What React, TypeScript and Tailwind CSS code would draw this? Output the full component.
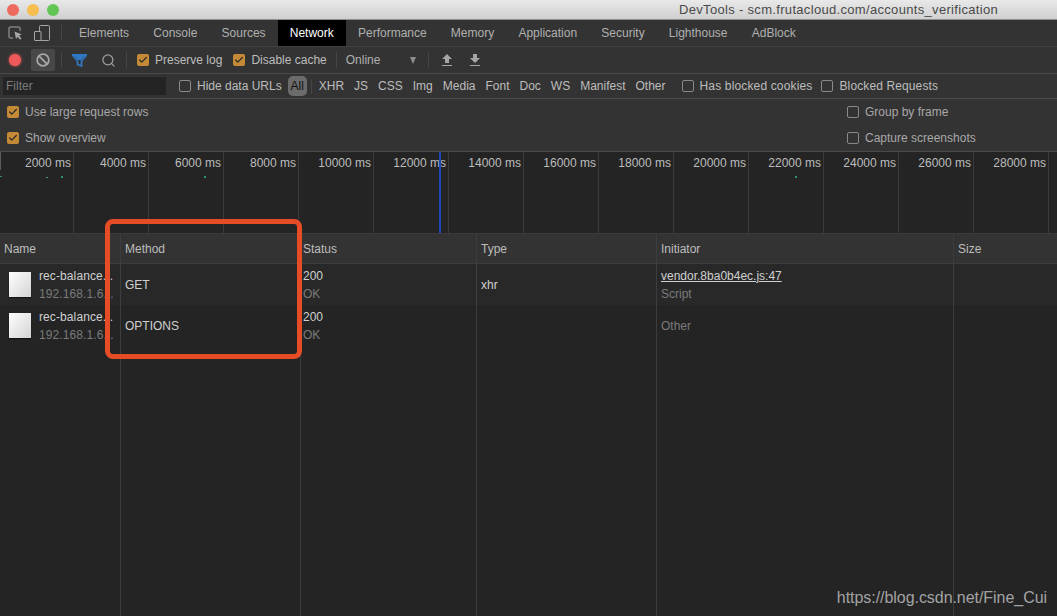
import { ReactNode } from "react";
import { Check, Search, Ban } from "lucide-react";

const tabs = ["Elements", "Console", "Sources", "Network", "Performance", "Memory", "Application", "Security", "Lighthouse", "AdBlock"];
const filters = ["XHR", "JS", "CSS", "Img", "Media", "Font", "Doc", "WS", "Manifest", "Other"];
const ticks = ["2000", "4000", "6000", "8000", "10000", "12000", "14000", "16000", "18000", "20000", "22000", "24000", "26000", "28000"];
const cols = "grid grid-cols-[121px_180px_176px_180px_297px_1fr]";

function Box({ checked, label, className = "" }: { checked?: boolean; label: string; className?: string }) {
  return (
    <label className={`flex items-center gap-[6px] whitespace-nowrap ${className}`}>
      {checked ? (
        <span className="w-[12px] h-[12px] rounded-[2px] bg-[#c48a35] flex items-center justify-center">
          <Check size={10} strokeWidth={3} className="text-[#2a2a2a]" />
        </span>
      ) : (
        <span className="w-[12px] h-[12px] rounded-[2px] border border-[#8a8a8a]" />
      )}
      <span>{label}</span>
    </label>
  );
}

function Cell({ children, last, tight }: { children?: ReactNode; last?: boolean; tight?: boolean }) {
  return (
    <div className={`flex flex-col justify-center min-w-0 ${tight ? "pl-[2px]" : "pl-[4px]"} ${last ? "" : "border-r border-[#3d3d3d]"}`}>
      {children}
    </div>
  );
}

function Two({ top, bottom, link }: { top: string; bottom: string; link?: boolean }) {
  return (
    <>
      <div className={`h-[18px] leading-[18px] text-[#d0d0d0] ${link ? "underline" : ""}`}>{top}</div>
      <div className="h-[18px] leading-[18px] text-[#7b7b7b]">{bottom}</div>
    </>
  );
}

function NameCell() {
  return (
    <div className="flex items-center gap-[8px] pl-[9px] border-r border-[#3d3d3d] min-w-0">
      <div className="w-[22px] h-[25px] shrink-0 bg-gradient-to-br from-white to-[#d4d4d4] shadow-[0_1px_1px_rgba(0,0,0,0.5)]" />
      <div className="min-w-0 tracking-[0.1px]">
        <div className="h-[18px] leading-[18px] text-[#d0d0d0] whitespace-nowrap">rec-balance...</div>
        <div className="h-[18px] leading-[18px] text-[#7b7b7b] whitespace-nowrap">192.168.1.6...</div>
      </div>
    </div>
  );
}

function Transfer({ up, className = "" }: { up?: boolean; className?: string }) {
  return (
    <svg width="10" height="12" viewBox="0 0 10 12" className={`text-[#a5a5a5] ${className}`}>
      <path d={up ? "M5 0l5 5H7v4H3V5H0z" : "M3 0h4v4h3l-5 5-5-5h3z"} fill="currentColor" />
      <rect x="0" y="11" width="10" height="1" fill="currentColor" />
    </svg>
  );
}

export default function App() {
  return (
    <div className="relative w-[1057px] h-[616px] overflow-hidden flex flex-col bg-[#242424] text-[12px] text-[#bdbdbd] font-['Liberation_Sans',sans-serif]">
      {/* mac title bar */}
      <div className="h-[20px] shrink-0 flex items-center bg-gradient-to-b from-[#e9e9e9] to-[#d0d0d0] border-b border-[#8f8f8f] pl-[7px]">
        <span className="w-[12px] h-[12px] rounded-full bg-[#ee6a5f]" />
        <span className="w-[12px] h-[12px] rounded-full bg-[#f6bd4f] ml-[8px]" />
        <span className="w-[12px] h-[12px] rounded-full bg-[#62c654] ml-[8px]" />
        <span className="ml-[620px] text-[13px] tracking-[0.32px] text-[#4a4a4a] whitespace-nowrap">DevTools - scm.frutacloud.com/accounts_verification</span>
      </div>

      {/* tabs */}
      <div className="h-[27px] shrink-0 flex items-center bg-[#333333] border-b border-[#3f3f3f] pl-[8px]">
        <svg width="15" height="15" viewBox="0 0 15 15" fill="none" className="text-[#a5a5a5]">
          <path d="M5 12H2a1 1 0 0 1-1-1V2a1 1 0 0 1 1-1h9a1 1 0 0 1 1 1v3" stroke="currentColor" />
          <path d="M6.5 5.5l7.5 3-3 1 2.5 3-1.5 1.2-2.4-3-1.6 2.5z" fill="currentColor" />
        </svg>
        <svg width="16" height="16" viewBox="0 0 16 16" fill="none" className="text-[#a5a5a5] ml-[11px]">
          <rect x="5.5" y="0.5" width="10" height="15" rx="1" stroke="currentColor" />
          <rect x="0.5" y="6.5" width="6.5" height="9" rx="0.5" fill="#333333" stroke="currentColor" />
        </svg>
        <div className="w-px h-[16px] bg-[#454545] ml-[11px] mr-[5px]" />
        {tabs.map((t) => (
          <div key={t} className={`h-full flex items-center px-[12.1px] whitespace-nowrap ${t === "Network" ? "bg-black text-white" : "text-[#b0b0b0]"}`}>
            {t}
          </div>
        ))}
      </div>

      {/* toolbar */}
      <div className="h-[27px] shrink-0 flex items-center bg-[#333333] border-b border-[#4a4a4a] pl-[9px]">
        <span className="w-[12px] h-[12px] rounded-full bg-[#ee5a5a] shadow-[0_0_3px_#ee5a5a]" />
        <div className="w-[24px] h-[22px] ml-[10px] rounded-[2px] bg-[#484848] flex items-center justify-center">
          <Ban size={14} strokeWidth={3} className="text-[#a8a8a8]" />
        </div>
        <div className="w-px h-[16px] bg-[#454545] ml-[6px]" />
        <svg width="15" height="13" viewBox="0 0 15 13" className="ml-[10px]">
          <path d="M0.5 1h14l-5 6v5l-4-1.5V7z" fill="none" stroke="#2f78c4" strokeWidth="1.8" />
          <path d="M2 1h11L9 6H6z" fill="#2f78c4" />
        </svg>
        <Search size={15} className="text-[#a0a0a0] ml-[14px]" />
        <div className="w-px h-[16px] bg-[#454545] ml-[10px]" />
        <Box checked label="Preserve log" className="ml-[10px]" />
        <Box checked label="Disable cache" className="ml-[11px]" />
        <div className="w-px h-[16px] bg-[#454545] ml-[9px]" />
        <span className="ml-[9px] text-[#b0b0b0]">Online</span>
        <span className="ml-[30px] w-0 h-0 border-x-[3.5px] border-x-transparent border-t-[7px] border-t-[#8f8f8f]" />
        <div className="w-px h-[16px] bg-[#454545] ml-[12px]" />
        <Transfer up className="ml-[13px]" />
        <Transfer className="ml-[18px]" />
      </div>

      {/* filter row */}
      <div className="h-[25px] shrink-0 flex items-center bg-[#333333] border-b border-[#4a4a4a] pl-[3px]">
        <div className="w-[163px] h-[18px] bg-[#242424] pl-[3px] leading-[18px] text-[#7b7b7b]">Filter</div>
        <Box label="Hide data URLs" className="ml-[13px] text-[#bdbdbd]" />
        <span className="ml-[6px] w-[19px] h-[20px] rounded-[5px] bg-[#6b6b6b] text-[#111] flex items-center justify-center">All</span>
        <div className="w-px h-[15px] bg-[#454545] ml-[4px] mr-[3px]" />
        <div className="flex gap-[10px] ml-[4px]">
          {filters.map((f) => (
            <span key={f} className="whitespace-nowrap">{f}</span>
          ))}
        </div>
        <Box label="Has blocked cookies" className="ml-[16px] tracking-[0.15px]" />
        <Box label="Blocked Requests" className="ml-[9px] tracking-[0.12px]" />
      </div>

      {/* settings */}
      <div className="h-[53px] shrink-0 grid grid-cols-[847px_1fr] grid-rows-2 items-center bg-[#333333] border-b border-[#4a4a4a] pl-[7px] text-[#a8a8a8]">
        <Box checked label="Use large request rows" />
        <Box label="Group by frame" className="ml-[-7px]" />
        <Box checked label="Show overview" />
        <Box label="Capture screenshots" className="ml-[-7px]" />
      </div>

      {/* overview */}
      <div className="relative h-[82px] shrink-0 flex bg-[#242424] border-b border-[#3a3a3a]">
        {ticks.map((t, i) => (
          <div key={t} className={`shrink-0 border-r border-[#3a3a3a] text-right pr-[2px] pt-[3.5px] leading-[14px] ${i === 0 ? "w-[74px]" : "w-[75px]"}`}>
            {t} ms
          </div>
        ))}
        <span className="absolute left-0 top-0 w-px h-[18px] bg-[#5a5a5a]" />
        <span className="absolute left-[0px] top-[24px] w-[2px] h-px bg-[#2f8f7f]" />
        <span className="absolute left-[46px] top-[25px] w-[2px] h-px bg-[#4a9a8a]" />
        <span className="absolute left-[61px] top-[24px] w-[2px] h-[2px] bg-[#2f8f7f]" />
        <span className="absolute left-[204px] top-[24px] w-[2px] h-[2px] bg-[#2f8f7f]" />
        <span className="absolute left-[795px] top-[24px] w-[2px] h-[2px] bg-[#2f8f7f]" />
        <span className="absolute left-[439px] top-0 bottom-0 w-[2px] bg-[#2048b8]" />
      </div>

      {/* table */}
      <div className="flex-1 min-h-0 flex flex-col">
        <div className={`${cols} h-[30px] shrink-0 bg-[#333333] border-b border-[#3d3d3d]`}>
          <Cell>Name</Cell>
          <Cell>Method</Cell>
          <Cell tight>Status</Cell>
          <Cell>Type</Cell>
          <Cell>Initiator</Cell>
          <Cell last>Size</Cell>
        </div>
        <div className={`${cols} h-[41px] shrink-0 bg-[#282828]`}>
          <NameCell />
          <Cell><span className="text-[#d0d0d0]">GET</span></Cell>
          <Cell tight><Two top="200" bottom="OK" /></Cell>
          <Cell><span className="text-[#d0d0d0]">xhr</span></Cell>
          <Cell><Two top="vendor.8ba0b4ec.js:47" bottom="Script" link /></Cell>
          <Cell last />
        </div>
        <div className={`${cols} h-[41px] shrink-0`}>
          <NameCell />
          <Cell><span className="text-[#d0d0d0]">OPTIONS</span></Cell>
          <Cell tight><Two top="200" bottom="OK" /></Cell>
          <Cell />
          <Cell><span className="text-[#7b7b7b]">Other</span></Cell>
          <Cell last />
        </div>
        <div className={`${cols} flex-1`}>
          <Cell /><Cell /><Cell /><Cell /><Cell /><Cell last />
        </div>
      </div>

      {/* annotation + watermark drawn over the screenshot */}
      <div className="absolute left-[105px] top-[219px] w-[197px] h-[140px] border-[5px] border-[#e64d26] rounded-[8px]" />
      <div className="absolute right-[10px] bottom-[8px] text-[16px] leading-[20px] text-[#a3a3a3] tracking-[-0.05px]">https://blog.csdn.net/Fine_Cui</div>
    </div>
  );
}
